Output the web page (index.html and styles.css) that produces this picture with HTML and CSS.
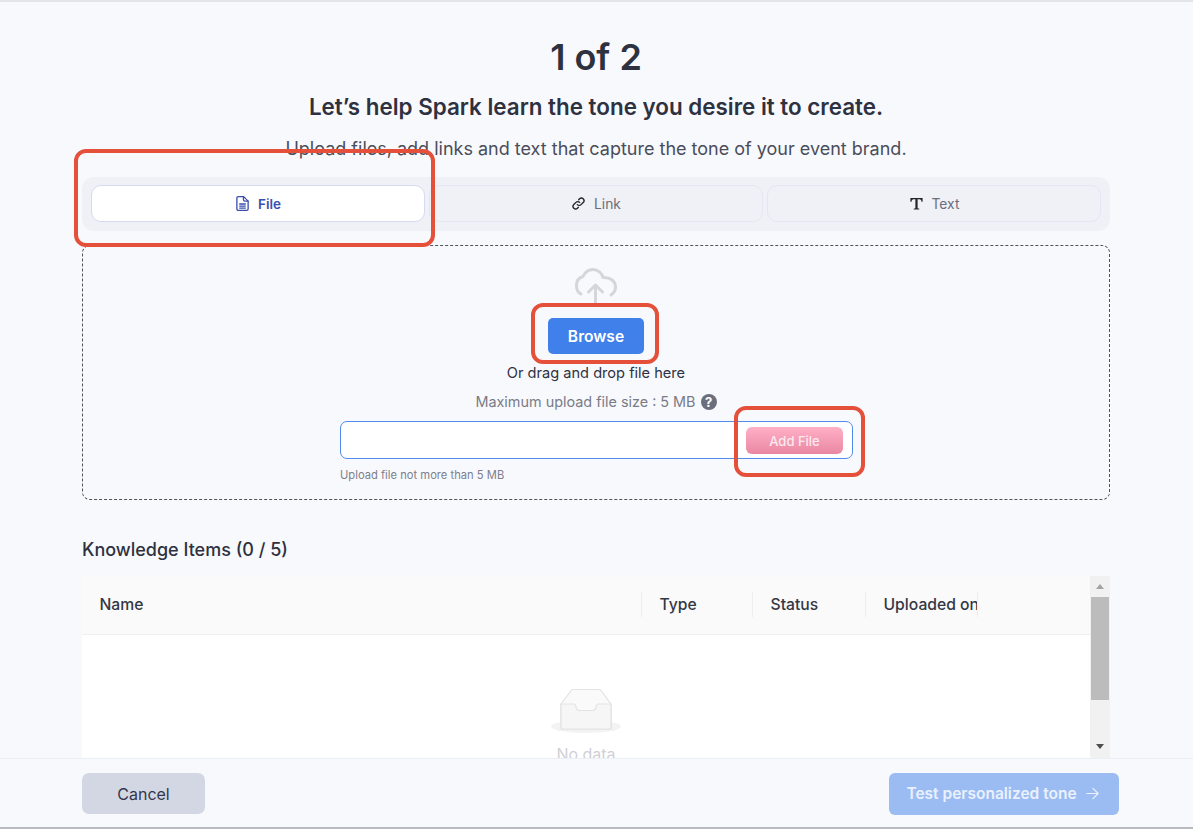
FILE: index.html
```html
<!DOCTYPE html>
<html lang="en">
<head>
    <meta charset="UTF-8">
    <meta name="viewport" content="width=device-width, initial-scale=1.0">
    <title>Personalized tone</title>
    <link rel="stylesheet" href="styles.css">
</head>
<body>
    <div class="page">
        <main class="content">
            <h1>1 of 2</h1>
            <h2>Let’s help Spark learn the tone you desire it to create.</h2>
            <p class="intro">Upload files, add links and text that capture the tone of your event brand.</p>

            <div class="tabs">
                <button class="tab tab-active" type="button">
                    <svg class="tab-icon" viewBox="0 0 16 16" fill="none" stroke="currentColor" stroke-width="1.4" stroke-linejoin="round" stroke-linecap="round">
                        <path d="M2 2.200C2 1.300 2.700.7 3.500.7h5.700L14 5.500v8.300c0 .8-.7 1.500-1.500 1.500h-9c-.8 0-1.500-.7-1.500-1.500z"/>
                        <path d="M9 1v3c0 .9.600 1.500 1.500 1.500H14"/>
                        <path d="M5 8.500h6M5 10.700h6M5 12.900h6"/>
                    </svg>
                    File
                </button>
                <button class="tab" type="button">
                    <svg class="tab-icon icon-dark" viewBox="0 0 16 16" fill="none" stroke="currentColor" stroke-width="1.500" stroke-linecap="round">
                        <path d="M6.800 9.200a2.700 2.700 0 0 0 3.900 0l2.300-2.300a2.700 2.700 0 0 0-3.900-3.900l-.9.9"/>
                        <path d="M9.200 6.800a2.700 2.700 0 0 0-3.900 0L3 9.100A2.700 2.700 0 0 0 6.900 13l.9-.9"/>
                    </svg>
                    Link
                </button>
                <button class="tab" type="button">
                    <svg class="tab-icon icon-dark" viewBox="0 0 16 16" fill="currentColor">
                        <path d="M1.500 2h13v4.200h-1.200c-.1-1.700-.6-2.800-2.300-2.800H9.200v9.300c0 .5.300.7 1.700.7v1.100H5.100v-1.100c1.400 0 1.700-.2 1.700-.7V3.400H5C3.300 3.400 2.800 4.500 2.700 6.200H1.500z"/>
                    </svg>
                    Text
                </button>
            </div>

            <section class="dropzone">
                <svg class="cloud" viewBox="0 0 42 38" fill="none" stroke="#d4d6db" stroke-width="3" stroke-linecap="round" stroke-linejoin="round">
                    <path d="M6 26C3 24.500 1.500 21 1.500 17.500 1.500 12.500 4.500 9.500 8 8.500 10 4 13.500 1.500 18 1.500c5 0 9 3.500 10 8 7-.5 12.500 3.500 12.500 9.500 0 3.500-1.500 6-4.500 8"/>
                    <path d="M20.500 38V17M13.500 24l7-7 7 7"/>
                </svg>
                <button class="btn-browse" type="button">Browse</button>
                <p class="drag-text">Or drag and drop file here</p>
                <p class="max-size">Maximum upload file size : 5 MB <span class="help">?</span></p>
                <div class="file-input">
                    <button class="btn-add" type="button">Add File</button>
                </div>
                <p class="hint">Upload file not more than 5 MB</p>
            </section>

            <h3>Knowledge Items (0 / 5)</h3>

            <div class="table-wrap">
                <div class="table">
                    <div class="table-head">
                        <div class="th">Name</div>
                        <div class="th">Type</div>
                        <div class="th">Status</div>
                        <div class="th">Uploaded on</div>
                        <div class="th th-last"></div>
                    </div>
                    <div class="table-body">
                        <svg class="empty-icon" viewBox="0 0 72 48" fill="none">
                            <ellipse cx="36" cy="37.500" rx="35" ry="6.500" fill="#f3f3f3"/>
                            <path d="M11 15 22 .5h28L61 15v23a2 2 0 0 1-2 2H13a2 2 0 0 1-2-2z" fill="#fafafa" stroke="#e3e3e3" stroke-width="1.200"/>
                            <path d="M11 15h13c1.500 0 1.600 1 2 3 .3 2 1.200 3.500 3 3.500h14c1.800 0 2.700-1.500 3-3.500.4-2 .5-3 2-3h13v23a2 2 0 0 1-2 2H13a2 2 0 0 1-2-2z" fill="#f6f6f6" stroke="#e3e3e3" stroke-width="1.200"/>
                        </svg>
                        <div class="empty-text">No data</div>
                    </div>
                </div>
                <div class="scrollbar">
                    <span class="arrow arrow-up"></span>
                    <div class="scroll-track"><div class="scroll-thumb"></div></div>
                    <span class="arrow arrow-down"></span>
                </div>
            </div>
        </main>

        <footer class="footer">
            <button class="btn-cancel" type="button">Cancel</button>
            <button class="btn-next" type="button">
                Test personalized tone
                <svg class="arrow-icon" viewBox="0 0 16 16" fill="none" stroke="currentColor" stroke-width="1.300" stroke-linecap="round" stroke-linejoin="round">
                    <path d="M2 8h12M8.500 2.500 14 8l-5.500 5.500"/>
                </svg>
            </button>
        </footer>

        <!-- red review marks drawn over the page -->
        <div class="mark mark-file"></div>
        <div class="mark mark-browse"></div>
        <div class="mark mark-add"></div>
    </div>
</body>
</html>
```

FILE: styles.css
```css
* {
    box-sizing: border-box;
}

html, body {
    margin: 0;
    height: 100%;
    overflow: hidden;
}

body {
    background: #f8f9fd;
    font-family: 'Inter', 'Liberation Sans', sans-serif;
    color: #2e3140;
}

button {
    font-family: inherit;
    border: none;
    cursor: pointer;
}

p, h1, h2, h3 {
    margin: 0;
}

/* Page frame */
.page {
    position: relative;
    height: 829px;
    display: flex;
    flex-direction: column;
    border-top: 2px solid #e4e5e9;
    border-bottom: 2px solid #b9bbc0;
}

.content {
    flex: 1;
    min-height: 0;
    overflow: hidden;
    padding: 0 83px 0 82px;
    text-align: center;
}

/* Headings */
h1 {
    margin-top: 33px;
    font-size: 36px;
    line-height: 44px;
    font-weight: 600;
}

h2 {
    margin-top: 14px;
    font-size: 22.4px;
    line-height: 28px;
    font-weight: 600;
}

.intro {
    margin-top: 14px;
    font-size: 18px;
    line-height: 28px;
    color: #4a4d5a;
}

/* Tabs */
.tabs {
    margin-top: 14px;
    padding: 8px 9px 9px;
    display: grid;
    grid-template-columns: 334px 1fr 334px;
    gap: 4px;
    height: 54px;
    background: #f0f1f6;
    border-radius: 12px;
}

.tab {
    display: flex;
    align-items: center;
    justify-content: center;
    gap: 8px;
    padding-bottom: 1px;
    background: transparent;
    border: 1px solid #e4e6f3;
    border-radius: 10px;
    font-size: 13.8px;
    color: #6b6e7b;
}

.tab-active {
    background: #fff;
    border-color: #d5daf2;
    color: #3a4db0;
    font-size: 13.5px;
    font-weight: 600;
}

.tab-icon {
    width: 15px;
    height: 15px;
}

.icon-dark {
    color: #23252e;
}

/* Upload area */
.dropzone {
    position: relative;
    margin-top: 14px;
    height: 255px;
    padding-top: 22px;
    border: 1px dashed #50525c;
    border-radius: 8px;
    display: flex;
    flex-direction: column;
    align-items: center;
}

.cloud {
    width: 42px;
    height: 38px;
    margin-bottom: 12px;
}

.btn-browse {
    width: 96px;
    height: 36px;
    padding-bottom: 1px;
    background: #3f80ea;
    border-radius: 5px;
    color: #fff;
    font-size: 15.6px;
    font-weight: 600;
}

.drag-text {
    margin-top: 9px;
    font-size: 14.6px;
    line-height: 20px;
}

.max-size {
    margin-top: 9px;
    display: flex;
    align-items: center;
    gap: 5px;
    font-size: 14.4px;
    line-height: 20px;
    color: #797c88;
}

.help {
    width: 16px;
    height: 16px;
    border-radius: 50%;
    background: #6b6f7d;
    color: #fff;
    font-size: 13px;
    font-weight: 700;
    line-height: 16px;
    text-align: center;
}

.file-input {
    margin: 9px 0 0 1px;
    width: 513px;
    height: 38px;
    padding: 5px 9px;
    display: flex;
    justify-content: flex-end;
    background: #fff;
    border: 1px solid #4f8bec;
    border-radius: 7px;
}

.btn-add {
    width: 97px;
    height: 27px;
    padding-bottom: 1px;
    background: linear-gradient(#ffb0c6, #ea87a3);
    border-radius: 6px;
    color: #fde9ef;
    font-size: 13px;
    font-weight: 500;
}

.hint {
    margin: 9px 0 0 1px;
    width: 513px;
    font-size: 11.2px;
    line-height: 14px;
    text-align: left;
    color: #7d808c;
}

/* Knowledge items table */
h3 {
    margin-top: 38px;
    font-size: 18px;
    line-height: 24px;
    font-weight: 500;
    text-align: left;
}

.table-wrap {
    margin-top: 14px;
    display: flex;
    height: 240px;
    background: #fff;
}

.table {
    flex: 1;
    min-width: 0;
}

.table-head {
    display: grid;
    grid-template-columns: 560px 111px 113px 112px 1fr;
    align-items: center;
    height: 59px;
    padding-bottom: 1px;
    background: #fafafa;
    border-bottom: 1px solid #f0f0f0;
}

.th {
    height: 25px;
    padding: 0 0 0 17.5px;
    overflow: hidden;
    white-space: nowrap;
    border-right: 1px solid #eeeeee;
    font-size: 15.7px;
    line-height: 25px;
    font-weight: 500;
    text-align: left;
    color: #343744;
}

.th-last {
    border-right: none;
}

.table-body {
    padding-top: 54px;
    display: flex;
    flex-direction: column;
    align-items: center;
    text-align: center;
}

.empty-icon {
    width: 72px;
    height: 48px;
}

.empty-text {
    margin-top: 6px;
    font-size: 16px;
    line-height: 22px;
    color: #cfd0d6;
}

/* Scrollbar */
.scrollbar {
    width: 20px;
    height: 182px;
    padding: 0 1px;
    display: flex;
    flex-direction: column;
    align-items: center;
    background: #f1f1f1;
}

.scroll-track {
    flex: 1;
    width: 18px;
}

.scroll-thumb {
    width: 18px;
    height: 103px;
    background: #bcbcbc;
}

.arrow {
    width: 0;
    height: 0;
    border-left: 4.5px solid transparent;
    border-right: 4.5px solid transparent;
}

.arrow-up {
    margin: 8px 0 8px;
    border-bottom: 5px solid #a3a3a3;
}

.arrow-down {
    margin: 8px 0 9px;
    border-top: 5px solid #4e4e4e;
}

/* Footer */
.footer {
    flex: none;
    height: 69px;
    padding: 14px 74px 0 82px;
    display: flex;
    justify-content: space-between;
    align-items: flex-start;
    background: #f8f9fd;
    border-top: 1px solid #eceef5;
}

.btn-cancel {
    width: 123px;
    height: 41px;
    padding-bottom: 1px;
    background: #d3d7e4;
    border-radius: 7px;
    font-size: 16px;
    color: #33364a;
}

.btn-next {
    width: 230px;
    height: 42px;
    padding: 0 2px 2px 0;
    display: flex;
    align-items: center;
    justify-content: center;
    gap: 8px;
    background: #9bbcf2;
    border-radius: 6px;
    font-size: 15.5px;
    font-weight: 600;
    color: #eaf1fd;
}

.arrow-icon {
    width: 15px;
    height: 15px;
}

/* Review marks */
.mark {
    position: absolute;
    border: 4px solid #e5503a;
    border-radius: 12px;
    pointer-events: none;
}

.mark-file {
    left: 74px;
    top: 147px;
    width: 361px;
    height: 98px;
}

.mark-browse {
    left: 531px;
    top: 301px;
    width: 128px;
    height: 61px;
}

.mark-add {
    left: 734px;
    top: 404px;
    width: 131px;
    height: 71px;
}
```
